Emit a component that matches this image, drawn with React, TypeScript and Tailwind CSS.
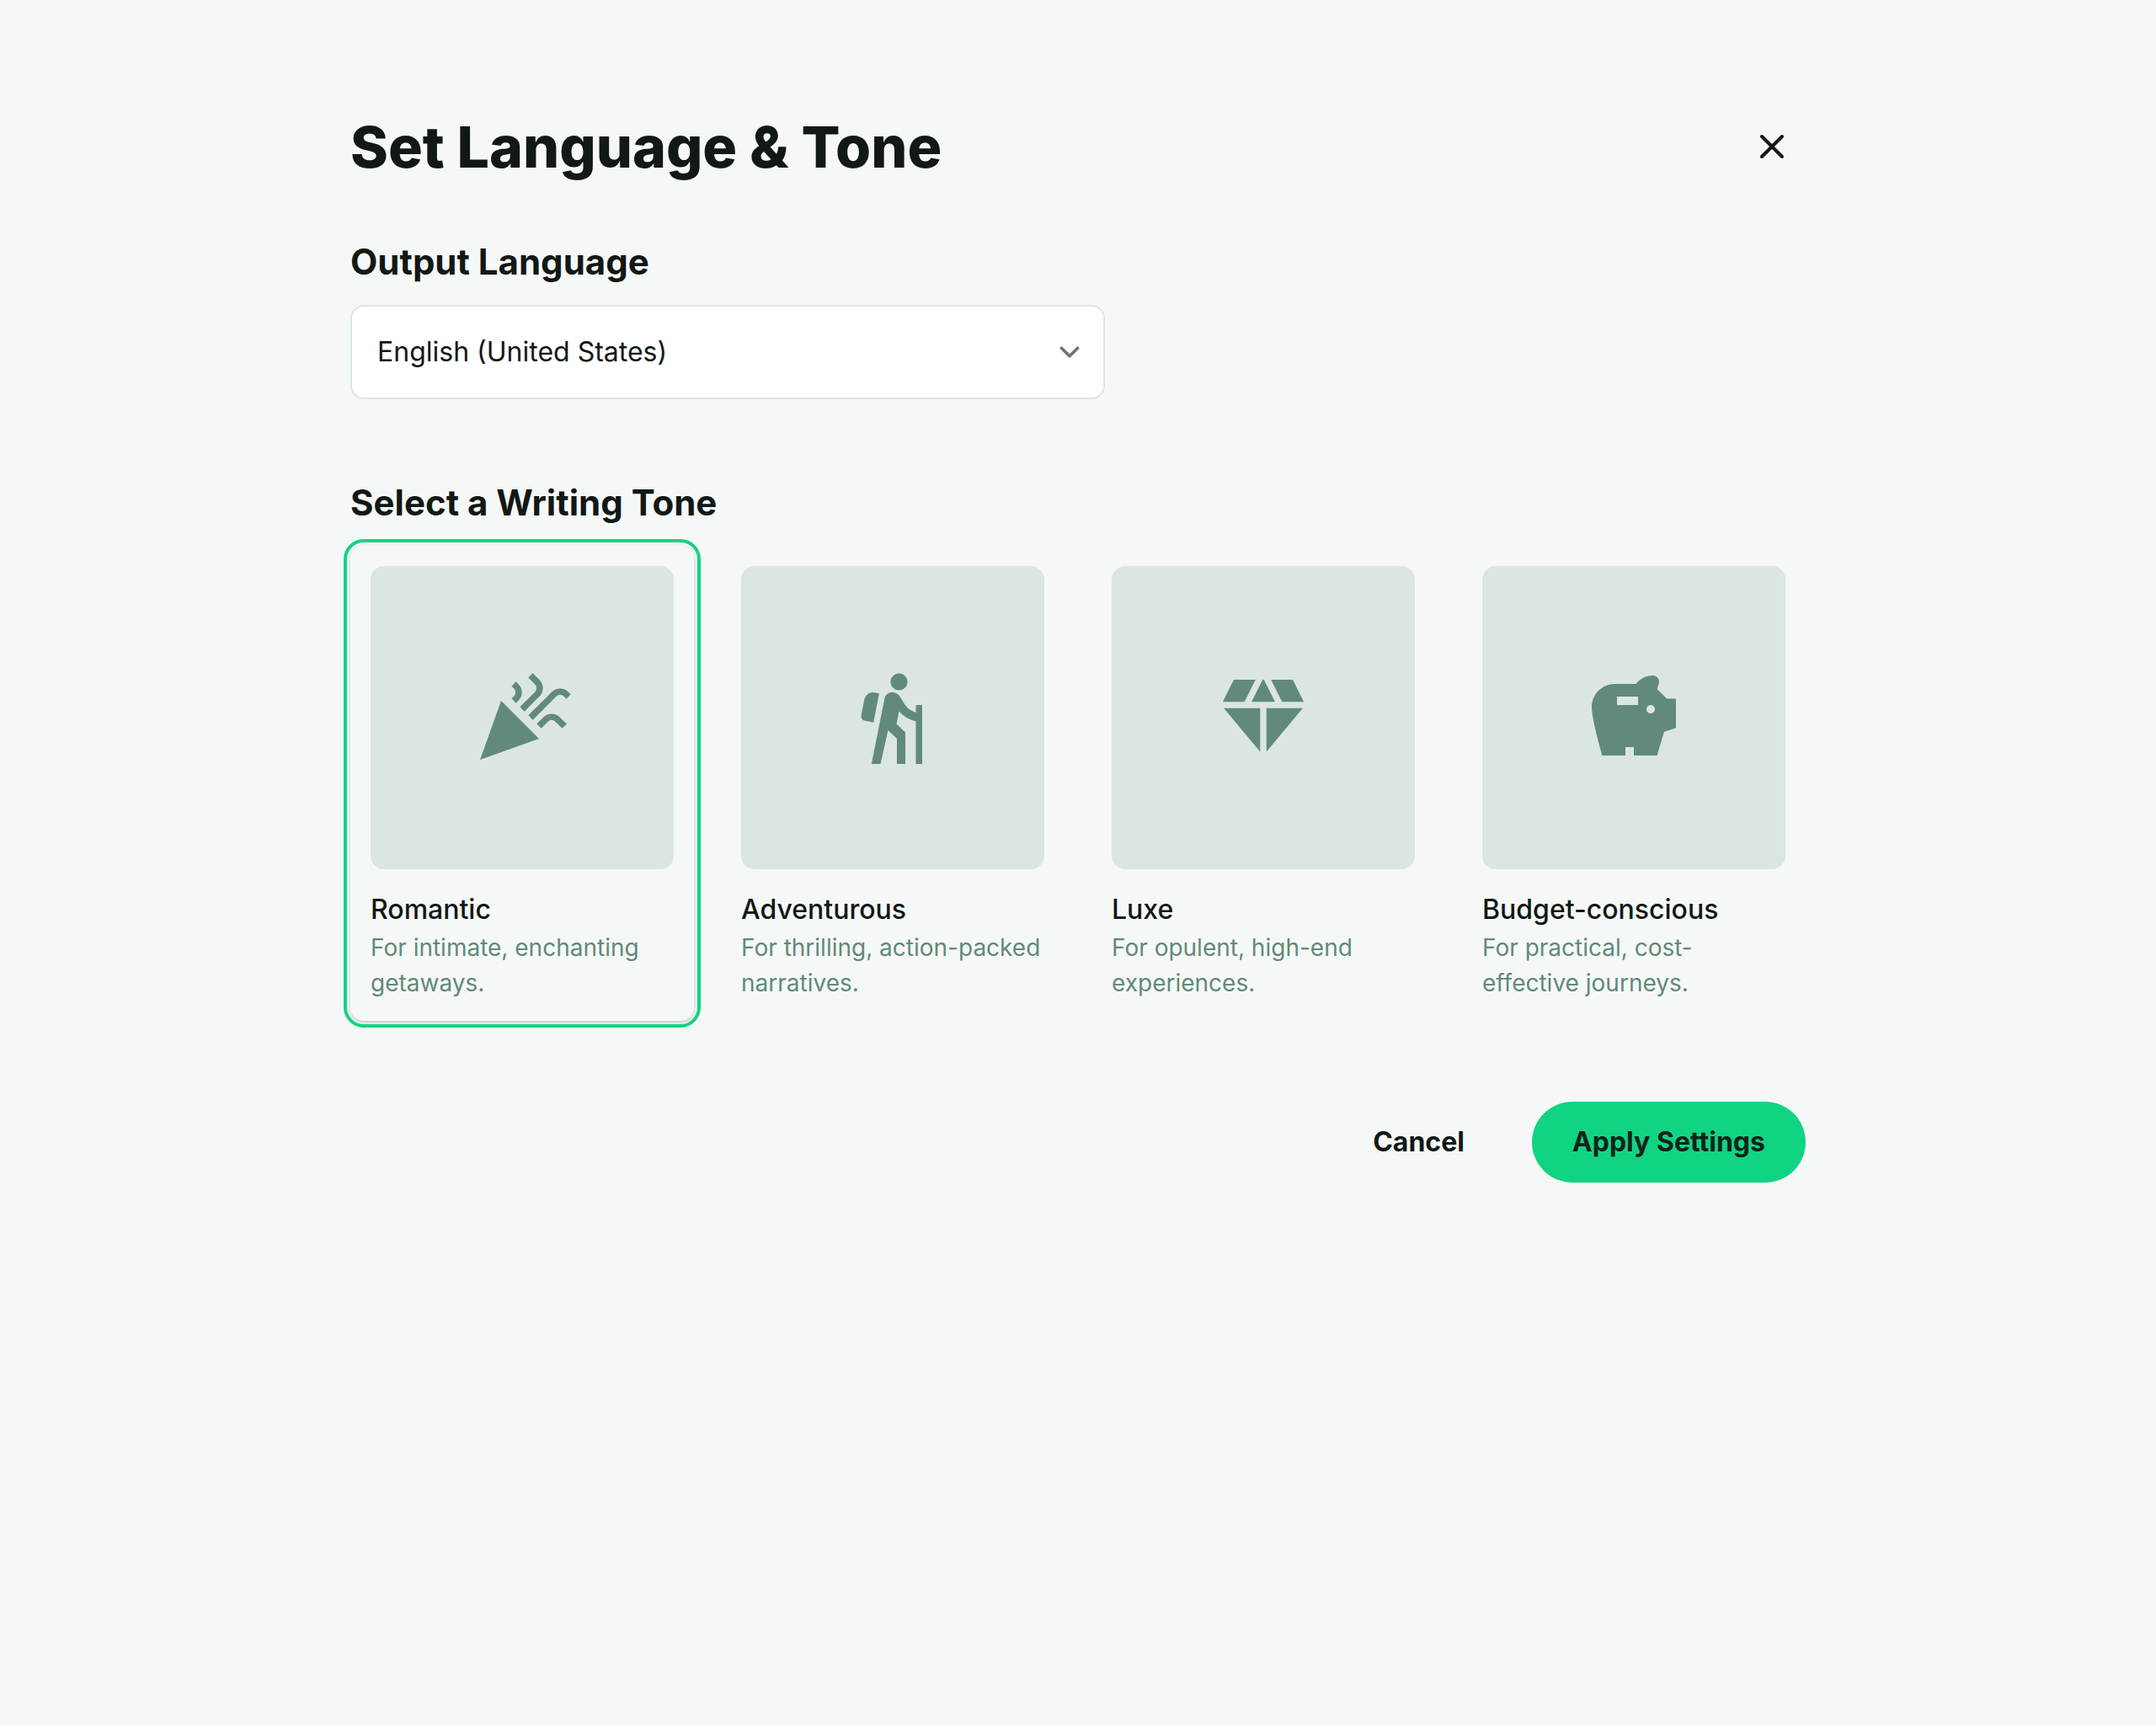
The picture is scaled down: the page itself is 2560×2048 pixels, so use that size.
import React from 'react';
import { X } from 'lucide-react';
import { MdCelebration, MdDiamond, MdHiking, MdSavings } from 'react-icons/md';

const tones = [
  { id: 'romantic', label: 'Romantic', description: 'For intimate, enchanting getaways.', icon: MdCelebration },
  { id: 'adventurous', label: 'Adventurous', description: 'For thrilling, action-packed narratives.', icon: MdHiking },
  { id: 'luxe', label: 'Luxe', description: 'For opulent, high-end experiences.', icon: MdDiamond },
  { id: 'budget', label: 'Budget-conscious', description: 'For practical, cost-effective journeys.', icon: MdSavings },
] as const;

type Tone = (typeof tones)[number];

interface ToneCardProps {
  tone: Tone;
  checked: boolean;
  onSelect: (id: Tone['id']) => void;
}

function ToneCard({ tone, checked, onSelect }: ToneCardProps) {
  return (
    <label
      className={`relative flex flex-col gap-6 p-6 rounded-2xl cursor-pointer ${checked ? 'outline-4 outline-offset-4 outline-[#11d483] shadow-[0_2px_6px_rgba(0,0,0,0.15),0_2px_4px_-2px_rgba(0,0,0,0.15)] bg-[#f6f8f7]' : ''}`}
    >
      <input
        type="radio"
        name="tone"
        value={tone.id}
        checked={checked}
        onChange={() => onSelect(tone.id)}
        className="sr-only"
      />
      <span className="w-full aspect-square rounded-2xl bg-[#dbe6e1] flex items-center justify-center">
        <tone.icon className="w-30 h-30 text-[#618a79]" />
      </span>
      <span className="flex flex-col">
        <span className="text-[32px] leading-12 font-medium">{tone.label}</span>
        <span className="text-[28px] leading-[42px] text-[#618a79]">{tone.description}</span>
      </span>
    </label>
  );
}

export default function App() {
  const [language, setLanguage] = React.useState('en-US');
  const [selected, setSelected] = React.useState<Tone['id']>('romantic');

  return (
    <div className="min-h-screen bg-[#f6f8f7] text-[#111815] font-['Inter',sans-serif]">
      <main className="max-w-[1920px] mx-auto px-24 pt-32">
        {/* Header */}
        <header className="flex items-center justify-between gap-6">
          <h1 className="text-[68px] leading-[92px] font-extrabold">Set Language &amp; Tone</h1>
          <button type="button" aria-label="Close" className="w-20 h-20 flex items-center justify-center rounded-full">
            <X className="w-12 h-12" />
          </button>
        </header>

        {/* Output language */}
        <section className="pt-16">
          <label htmlFor="language" className="block text-[42px] leading-[54px] font-bold">Output Language</label>
          <div className="relative mt-6 max-w-[896px]">
            <select
              id="language"
              value={language}
              onChange={(e) => setLanguage(e.target.value)}
              className="w-full h-28 pl-[30px] pr-20 rounded-2xl border-2 border-[#dbe6e1] bg-white text-[32px] appearance-none"
            >
              <option value="en-US">English (United States)</option>
              <option value="en-GB">English (United Kingdom)</option>
              <option value="fr-FR">French</option>
            </select>
            <svg viewBox="0 0 20 20" fill="none" className="absolute right-[18px] top-8 w-12 h-12 text-[#6b7280] pointer-events-none">
              <path d="M6 8l4 4 4-4" stroke="currentColor" strokeWidth="1.5" strokeLinecap="round" strokeLinejoin="round" />
            </svg>
          </div>
        </section>

        {/* Writing tone */}
        <fieldset className="pt-24">
          <legend className="contents">
            <span className="block text-[42px] leading-[54px] font-bold">Select a Writing Tone</span>
          </legend>
          <div className="grid grid-cols-4 gap-8 mt-6">
            {tones.map((tone) => (
              <ToneCard key={tone.id} tone={tone} checked={tone.id === selected} onSelect={setSelected} />
            ))}
          </div>
        </fieldset>

        {/* Actions */}
        <footer className="flex justify-end gap-8 pt-24 pb-16">
          <button type="button" className="h-24 px-12 rounded-full text-[32px] font-bold">Cancel</button>
          <button type="button" className="h-24 px-12 rounded-full bg-[#11d483] text-[32px] font-bold text-[#10221a]">
            Apply Settings
          </button>
        </footer>
      </main>
    </div>
  );
}
